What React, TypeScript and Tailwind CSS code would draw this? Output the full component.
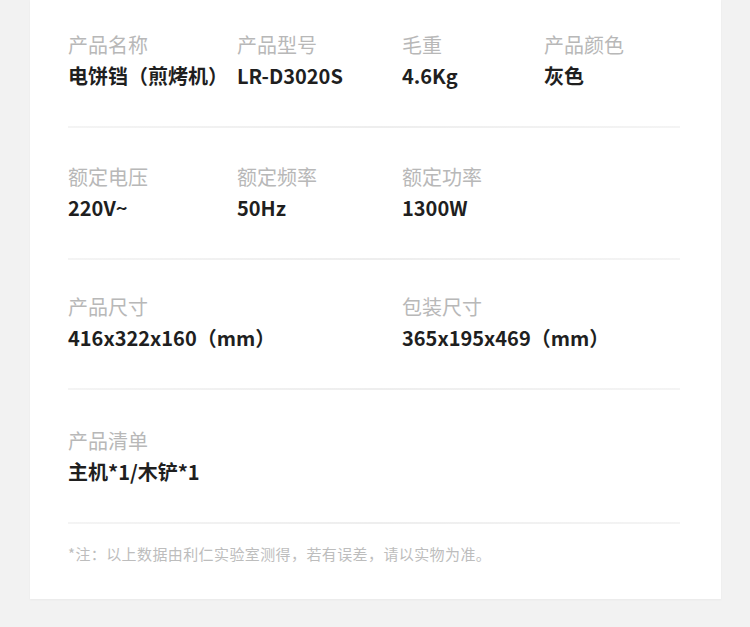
import React from 'react';

type Spec = { label: string; value: string };

const rows: Spec[][] = [
  [
    { label: '产品名称', value: '电饼铛（煎烤机）' },
    { label: '产品型号', value: 'LR-D3020S' },
    { label: '毛重', value: '4.6Kg' },
    { label: '产品颜色', value: '灰色' },
  ],
  [
    { label: '额定电压', value: '220V~' },
    { label: '额定频率', value: '50Hz' },
    { label: '额定功率', value: '1300W' },
  ],
  [
    { label: '产品尺寸', value: '416x322x160（mm）' },
    { label: '', value: '' },
    { label: '包装尺寸', value: '365x195x469（mm）' },
  ],
  [{ label: '产品清单', value: '主机*1/木铲*1' }],
];

const topPad = ['pt-[30px]', 'pt-[34px]', 'pt-[32px]', 'pt-[36px]'];

const SpecItem: React.FC<Spec> = ({ label, value }) => (
  <div className="min-w-0">
    <p className="text-[20px] leading-[30px] text-[#b8b8b8] whitespace-nowrap">{label}</p>
    <p className="mt-px text-[20px] leading-[30px] font-bold text-[#1f1f1f] whitespace-nowrap">{value}</p>
  </div>
);

const Divider: React.FC = () => (
  <div className="mr-[3px] h-[2px] bg-linear-to-r from-[#f4f4f4] via-[#eeeeee] to-[#f4f4f4]" />
);

const App: React.FC = () => {
  return (
    <div
      className="min-h-[627px] w-[750px] bg-[#f2f2f2]"
      style={{ fontFamily: '"Noto Sans CJK SC", "Noto Sans", sans-serif' }}
    >
      <div className="ml-[30px] w-[691px] bg-white px-[38px] pb-[35px] shadow-[0_1px_2px_rgba(0,0,0,0.04)]">
        {rows.map((row, i) => (
          <div key={i}>
            <div className={`grid grid-cols-[169px_165px_142px_1fr] pb-[35px] ${topPad[i]}`}>
              {row.map((item, j) => (
                <SpecItem key={j} label={item.label} value={item.value} />
              ))}
            </div>
            <Divider />
          </div>
        ))}
        <p className="pt-[20px] text-[15px] leading-[20px] tracking-[0.4px] text-[#bdbdbd]">
          *注：以上数据由利仁实验室测得，若有误差，请以实物为准。
        </p>
      </div>
    </div>
  );
};

export default App;
